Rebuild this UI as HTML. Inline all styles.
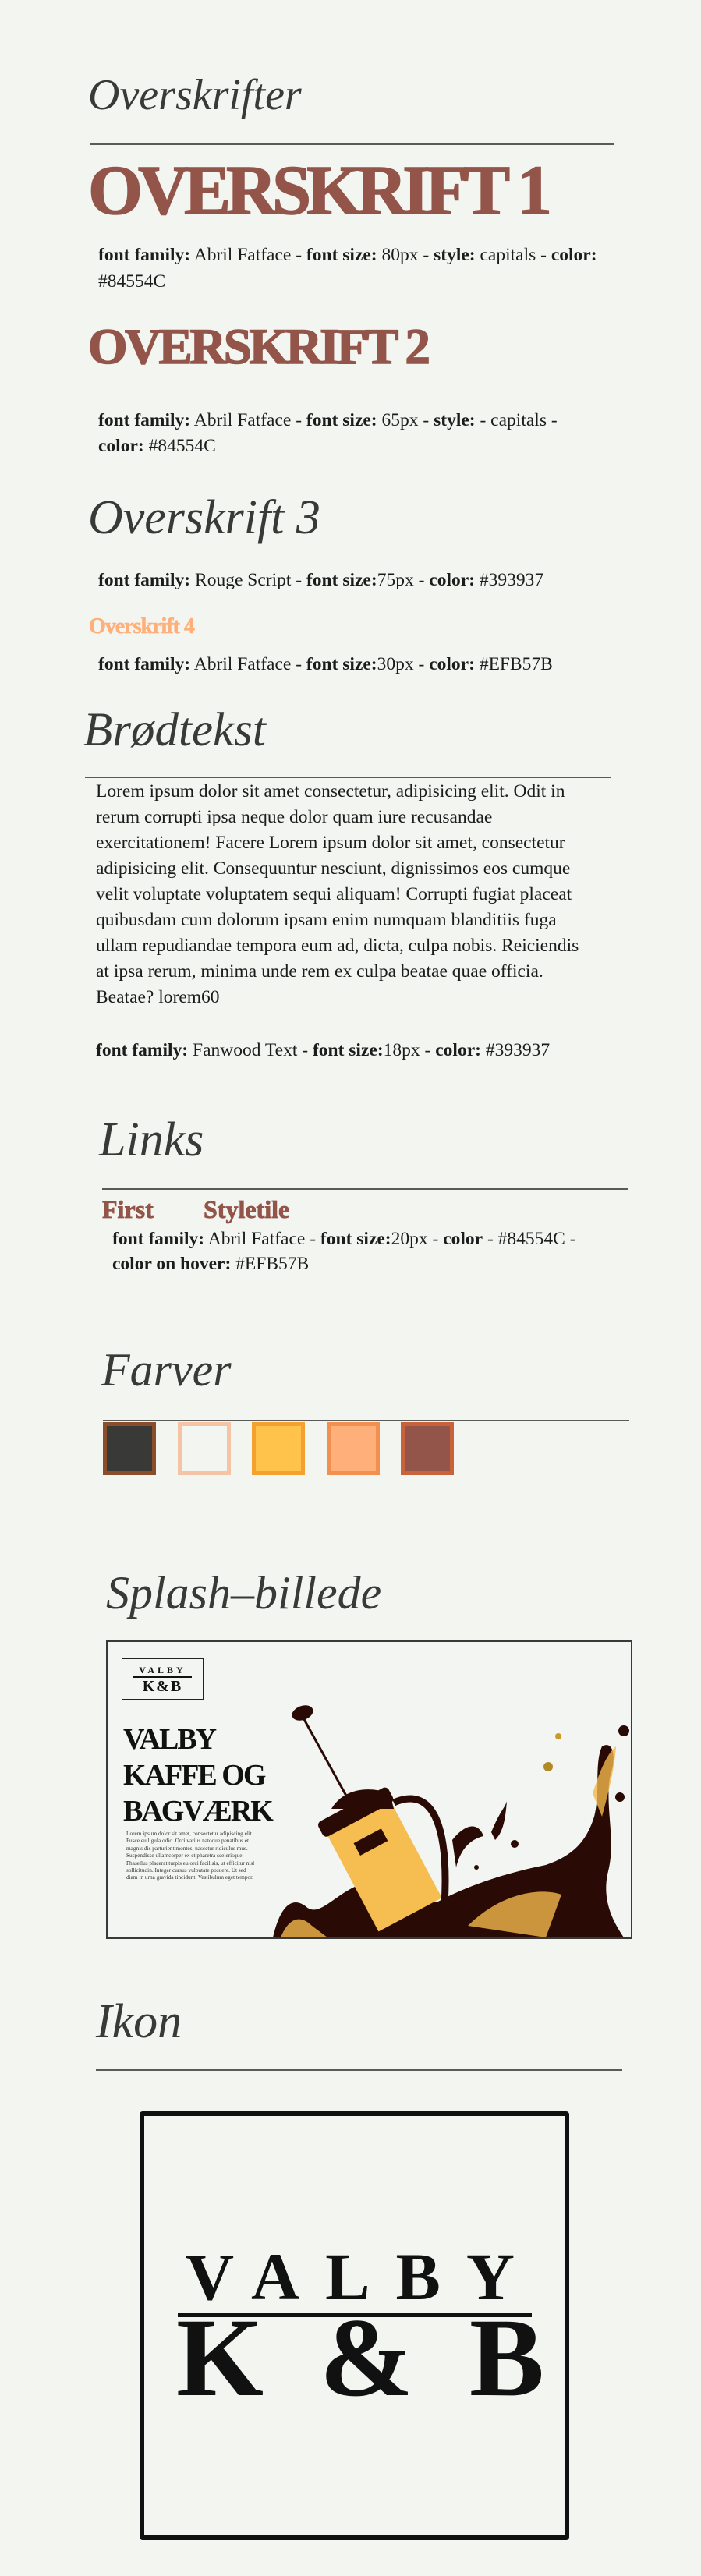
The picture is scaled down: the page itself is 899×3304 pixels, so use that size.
<!DOCTYPE html>
<html><head><meta charset="utf-8">
<style>
*{margin:0;padding:0;box-sizing:border-box}
html,body{width:899px;height:3304px;background:#f3f5f1;overflow:hidden}
body{position:relative;font-family:"Liberation Serif",serif;color:#1c1c1c}
.a{position:absolute;white-space:nowrap}
.sc{font-family:"Liberation Serif",serif;font-style:italic;color:#393937;line-height:1}
.hr{position:absolute;height:2px;background:#5a5a58}
.h{font-family:"Liberation Serif",serif;font-weight:bold;color:#93554a;line-height:1;-webkit-text-stroke:1.5px #93554a}
.d{font-size:23.5px;line-height:34px}
.d b{font-weight:bold}
.sw{position:absolute;top:1824px;width:68px;height:68px;border:5px solid}
</style></head><body>

<div class="a sc" style="left:113px;top:94px;font-size:56px">Overskrifter</div>
<div class="hr" style="left:115px;top:184px;width:672px"></div>
<div class="a h" style="left:113px;top:200px;font-size:90px;letter-spacing:-6px">OVERSKRIFT 1</div>
<div class="a d" style="left:126px;top:310px"><b>font family:</b> Abril Fatface - <b>font size:</b> 80px - <b>style:</b> capitals - <b>color:</b><br>#84554C</div>
<div class="a h" style="left:113px;top:413px;font-size:65px;letter-spacing:-3.5px">OVERSKRIFT 2</div>
<div class="a d" style="left:126px;top:523px;line-height:33px"><b>font family:</b> Abril Fatface - <b>font size:</b> 65px - <b>style:</b> - capitals -<br><b>color:</b> #84554C</div>
<div class="a sc" style="left:113px;top:633px;font-size:62px">Overskrift 3</div>
<div class="a d" style="left:126px;top:727px"><b>font family:</b> Rouge Script - <b>font size:</b>75px - <b>color:</b> #393937</div>
<div class="a h" style="left:114px;top:790px;font-size:28px;color:#ffb07a;-webkit-text-stroke:0.6px #ffb07a;letter-spacing:-1px">Overskrift 4</div>
<div class="a d" style="left:126px;top:835px"><b>font family:</b> Abril Fatface - <b>font size:</b>30px - <b>color:</b> #EFB57B</div>

<div class="a sc" style="left:107px;top:906px;font-size:61px">Brødtekst</div>
<div class="hr" style="left:109px;top:996px;width:674px"></div>
<div class="a" style="left:123px;top:999px;font-size:23.5px;line-height:33px">Lorem ipsum dolor sit amet consectetur, adipisicing elit. Odit in<br>rerum corrupti ipsa neque dolor quam iure recusandae<br>exercitationem! Facere Lorem ipsum dolor sit amet, consectetur<br>adipisicing elit. Consequuntur nesciunt, dignissimos eos cumque<br>velit voluptate voluptatem sequi aliquam! Corrupti fugiat placeat<br>quibusdam cum dolorum ipsam enim numquam blanditiis fuga<br>ullam repudiandae tempora eum ad, dicta, culpa nobis. Reiciendis<br>at ipsa rerum, minima unde rem ex culpa beatae quae officia.<br>Beatae? lorem60</div>
<div class="a d" style="left:123px;top:1330px"><b>font family:</b> Fanwood Text - <b>font size:</b>18px - <b>color:</b> #393937</div>

<div class="a sc" style="left:127px;top:1431px;font-size:62px">Links</div>
<div class="hr" style="left:131px;top:1524px;width:674px"></div>
<div class="a h" style="left:131px;top:1535px;font-size:32px;-webkit-text-stroke:0.8px #93554a">First</div>
<div class="a h" style="left:261px;top:1535px;font-size:32px;-webkit-text-stroke:0.8px #93554a">Styletile</div>
<div class="a d" style="left:144px;top:1573px;line-height:32px"><b>font family:</b> Abril Fatface - <b>font size:</b>20px - <b>color</b> - #84554C -<br><b>color on hover:</b> #EFB57B</div>

<div class="a sc" style="left:130px;top:1727px;font-size:60px">Farver</div>
<div class="hr" style="left:132px;top:1821px;width:675px"></div>
<div class="sw" style="left:132px;background:#393937;border-color:#8a4f2a"></div>
<div class="sw" style="left:228px;background:#f3f5f1;border-color:#f5c4a5"></div>
<div class="sw" style="left:323px;background:#ffc24a;border-color:#f5a130"></div>
<div class="sw" style="left:419px;background:#ffb07a;border-color:#f29050"></div>
<div class="sw" style="left:514px;background:#93554a;border-color:#c8623a"></div>

<div class="a sc" style="left:136px;top:2013px;font-size:60px">Splash–billede</div>
<div style="position:absolute;left:136px;top:2104px;width:675px;height:383px;border:2px solid #393937;background:#f2f5f1;overflow:hidden"></div>
<svg style="position:absolute;left:0;top:0" width="899" height="3304" viewBox="0 0 899 3304">
 <g>
  <path d="M350,2485 C358,2450 372,2430 392,2445 C410,2462 432,2425 468,2415 L560,2440 C600,2418 650,2402 700,2392 C735,2380 752,2362 762,2330 C770,2300 762,2262 772,2240 C785,2232 792,2250 782,2280 C776,2320 790,2360 780,2400 C770,2440 790,2470 800,2485 Z" fill="#2a0a05"/>
  <path d="M360,2485 C370,2460 385,2455 400,2470 L420,2485 Z M600,2470 C640,2430 690,2420 720,2430 L700,2485 Z M760,2300 C770,2270 778,2250 790,2240 C788,2270 780,2300 772,2330 Z" fill="#f2b84a" opacity="0.8"/>
  <g transform="rotate(-28 490 2390)">
   <rect x="445" y="2315" width="92" height="150" fill="#f6bd50"/>
   <rect x="440" y="2305" width="102" height="22" rx="6" fill="#2a0a05"/>
   <rect x="470" y="2350" width="40" height="18" fill="#2a0a05"/>
  </g>
  <path d="M425,2320 C440,2295 470,2290 500,2300 L505,2320 Z" fill="#2a0a05"/>
  <line x1="386" y1="2198" x2="445" y2="2305" stroke="#2a0a05" stroke-width="3"/>
  <ellipse cx="388" cy="2197" rx="14" ry="9" transform="rotate(-20 388 2197)" fill="#2a0a05"/>
  <path d="M505,2312 C555,2290 580,2340 568,2470" fill="none" stroke="#2a0a05" stroke-width="9"/>
  <path d="M580,2360 C600,2335 615,2340 620,2355 C600,2360 590,2375 585,2395 Z" fill="#2a0a05"/>
  <path d="M630,2350 C640,2325 648,2318 650,2310 C648,2335 645,2350 635,2360 Z" fill="#2a0a05"/>
  <circle cx="716" cy="2227" r="4" fill="#c89a30"/>
  <circle cx="703" cy="2266" r="6" fill="#b08a28"/>
  <circle cx="800" cy="2220" r="7" fill="#2a0a05"/>
  <circle cx="795" cy="2305" r="6" fill="#2a0a05"/>
  <circle cx="611" cy="2395" r="3" fill="#2a0a05"/>
  <circle cx="660" cy="2365" r="5" fill="#2a0a05"/>
 </g>
</svg>
<div style="position:absolute;left:156px;top:2127px;width:105px;height:53px;border:1.5px solid #222;text-align:center;font-weight:bold;color:#111">
 <div style="font-size:12px;letter-spacing:4px;line-height:14px;margin-top:7px">VALBY</div>
 <div style="height:2px;background:#111;margin:1px 14px"></div>
 <div style="font-size:20px;letter-spacing:2px;line-height:20px">K&amp;B</div>
</div>
<div class="a" style="left:158px;top:2208px;font-size:38px;line-height:46px;font-weight:bold;color:#111;letter-spacing:-2px">VALBY<br>KAFFE OG<br>BAGVÆRK</div>
<div class="a" style="left:162px;top:2347px;font-size:7.3px;line-height:9.4px;color:#333">Lorem ipsum dolor sit amet, consectetur adipiscing elit.<br>Fusce eu ligula odio. Orci varius natoque penatibus et<br>magnis dis parturient montes, nascetur ridiculus mus.<br>Suspendisse ullamcorper ex et pharetra scelerisque.<br>Phasellus placerat turpis eu orci facilisis, ut efficitur nisl<br>sollicitudin. Integer cursus vulputate posuere. Ut sed<br>diam in urna gravida tincidunt. Vestibulum eget tempor.</div>

<div class="a sc" style="left:123px;top:2562px;font-size:62px">Ikon</div>
<div class="hr" style="left:123px;top:2654px;width:675px"></div>
<div style="position:absolute;left:179px;top:2708px;width:551px;height:550px;border:6px solid #111;border-radius:4px"></div>
<div class="a" style="left:238px;top:2877px;font-size:86px;line-height:1;font-weight:bold;color:#111;letter-spacing:33px">VALB<span style="letter-spacing:0">Y</span></div>
<div style="position:absolute;left:228px;top:2967px;width:454px;height:5px;background:#111"></div>
<div class="a" style="left:226px;top:2953px;font-size:144px;line-height:1;font-weight:bold;color:#111;letter-spacing:72px">K&amp;<span style="letter-spacing:0">B</span></div>
</body></html>
